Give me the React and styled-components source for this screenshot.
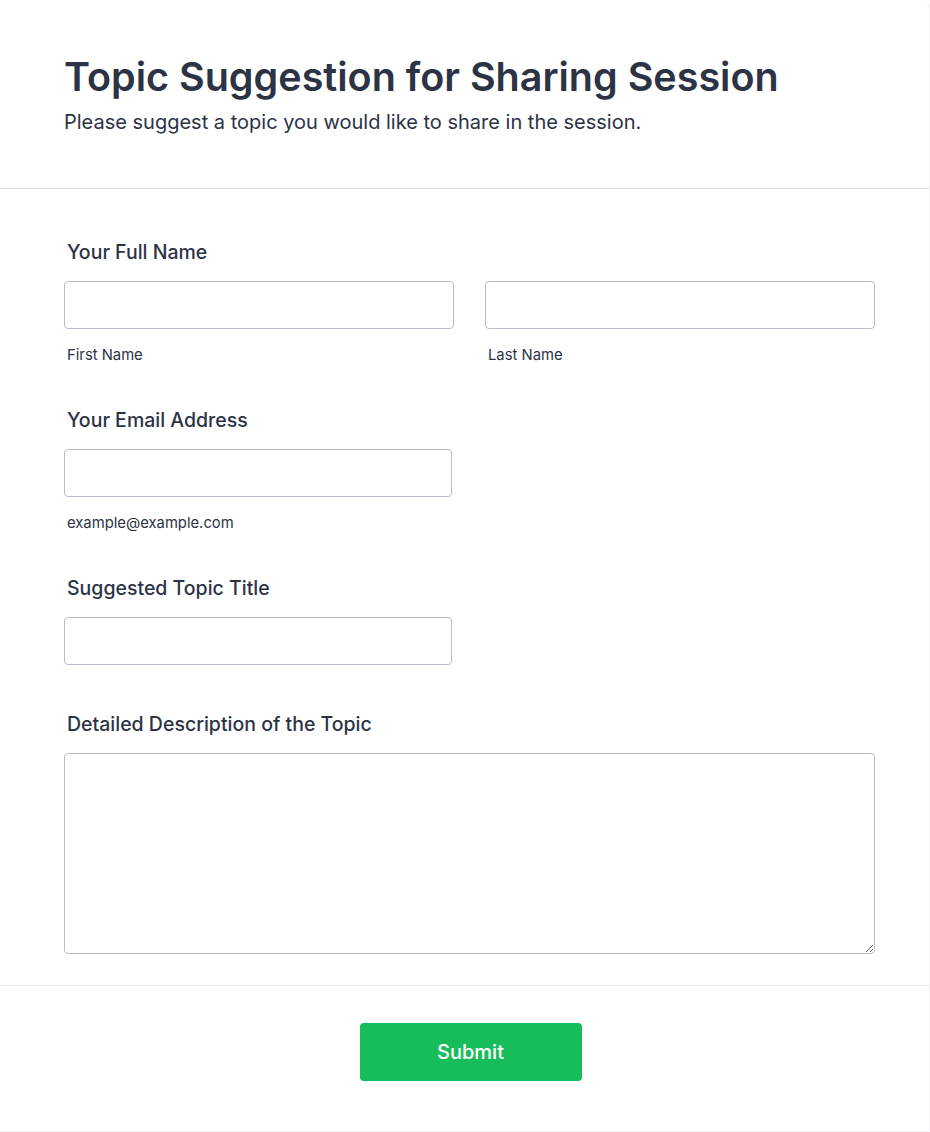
import { styled, createGlobalStyle } from "styled-components";

const GlobalStyle = createGlobalStyle`
  * { box-sizing: border-box; }
  body {
    margin: 0;
    background: #ffffff;
    font-family: "Inter", "Liberation Sans", sans-serif;
    color: #2c3345;
  }
`;

export default function App() {
  return (
    <>
      <GlobalStyle />
      <Card>
        <Header>
          <Title>Topic Suggestion for Sharing Session</Title>
          <Subtitle>
            Please suggest a topic you would like to share in the session.
          </Subtitle>
        </Header>
        <Fields>
          <Field>
            <Label>Your Full Name</Label>
            <Row>
              <Column>
                <Input type="text" />
                <SubLabel>First Name</SubLabel>
              </Column>
              <Column>
                <Input type="text" />
                <SubLabel>Last Name</SubLabel>
              </Column>
            </Row>
          </Field>
          <Field>
            <Label>Your Email Address</Label>
            <Column $width="388px">
              <Input type="email" />
              <SubLabel>example@example.com</SubLabel>
            </Column>
          </Field>
          <Field $extra>
            <Label>Suggested Topic Title</Label>
            <Column $width="388px">
              <Input type="text" />
            </Column>
          </Field>
          <Field>
            <Label>Detailed Description of the Topic</Label>
            <TextArea />
          </Field>
        </Fields>
        <Footer>
          <SubmitButton type="button">Submit</SubmitButton>
        </Footer>
      </Card>
    </>
  );
}

const Card = styled.div`
  width: 930px;
  min-height: 1132px;
  background: #ffffff;
  border-right: 1px solid #f1f1f8;
  border-bottom: 1px solid #f1f1f8;
  border-top-right-radius: 6px;
`;

const Header = styled.div`
  padding: 53px 64px 53px;
  border-bottom: 1px solid #d8d9e6;
`;

const Title = styled.h1`
  margin: 0 0 8px;
  font-size: 39.5px;
  line-height: 48px;
  font-weight: 600;
  color: #2c3345;
`;

const Subtitle = styled.p`
  margin: 0;
  font-size: 20px;
  line-height: 26px;
  font-weight: 400;
  color: #2c3345;
`;

const Fields = styled.div`
  display: flex;
  flex-direction: column;
  gap: 44px;
  padding: 51px 54px 31px 64px;
  border-bottom: 1px solid #eaebf2;
`;

const Field = styled.div`
  display: flex;
  flex-direction: column;
  margin-bottom: ${(p) => (p.$extra ? "3px" : "0")};
`;

const Label = styled.label`
  padding-left: 3px;
  margin-bottom: 17px;
  font-size: 19.5px;
  line-height: 24px;
  font-weight: 500;
  color: #2c3345;
`;

const Row = styled.div`
  display: grid;
  grid-template-columns: 390px 390px;
  gap: 31px;
`;

const Column = styled.div`
  display: flex;
  flex-direction: column;
  width: ${(p) => p.$width || "auto"};
`;

const Input = styled.input`
  width: 100%;
  height: 48px;
  border: 1px solid #b8bdc9;
  border-radius: 4px;
  background: #ffffff;
  padding: 0 12px;
  font-family: inherit;
  font-size: 16px;
  outline: none;
`;

const SubLabel = styled.span`
  margin-top: 17px;
  padding-left: 3px;
  font-size: 14.8px;
  line-height: 18px;
  color: #2c3345;
`;

const TextArea = styled.textarea`
  width: 811px;
  height: 201px;
  border: 1px solid #b8bdc9;
  border-radius: 4px;
  padding: 10px 12px;
  font-family: inherit;
  font-size: 16px;
  resize: vertical;
  outline: none;
`;

const Footer = styled.div`
  display: flex;
  justify-content: center;
  padding: 37px 0 50px 12px;
`;

const SubmitButton = styled.button`
  width: 222px;
  height: 58px;
  border: none;
  border-radius: 4px;
  background: #18bd5b;
  color: #ffffff;
  font-family: inherit;
  font-size: 20px;
  font-weight: 500;
  cursor: pointer;
`;
